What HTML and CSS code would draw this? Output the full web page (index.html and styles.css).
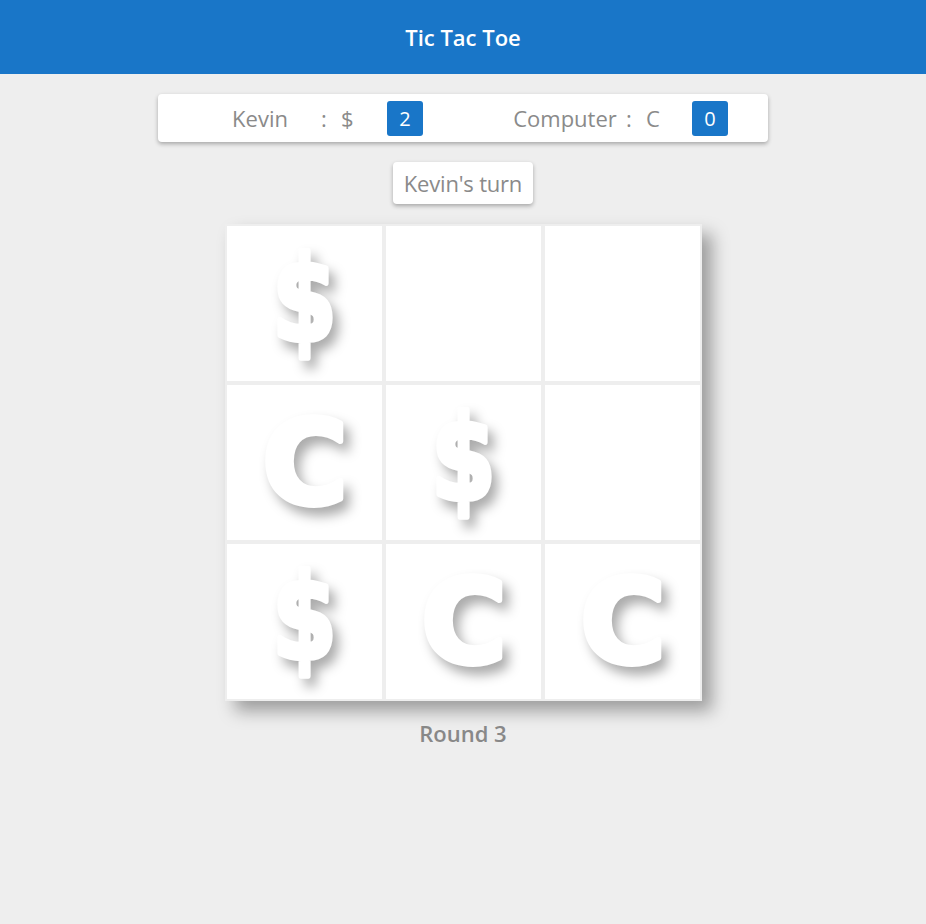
FILE: index.html
```html
<!DOCTYPE html>
<html>
<head>
<meta charset="utf-8">
<title>Tic Tac Toe</title>
<link rel="stylesheet" href="styles.css">
</head>
<body>
<header class="topbar"><h1 class="title">Tic Tac Toe</h1></header>
<main class="game">
  <section class="scores">
    <div class="player">
      <span class="name">Kevin</span><span class="colon">:</span><span class="sym">$</span><span class="badge">2</span>
    </div>
    <div class="player">
      <span class="name">Computer</span><span class="colon">:</span><span class="sym">C</span><span class="badge">0</span>
    </div>
  </section>
  <div class="turn">Kevin's turn</div>
  <div class="board">
    <div class="cell"><svg class="mark" viewBox="0 0 155 155"><text class="dollar" x="77.5" y="115" text-anchor="middle">$</text></svg></div>
    <div class="cell"></div>
    <div class="cell"></div>
    <div class="cell"><svg class="mark" viewBox="0 0 155 155"><text class="cee" x="78" y="118" text-anchor="middle">C</text></svg></div>
    <div class="cell"><svg class="mark" viewBox="0 0 155 155"><text class="dollar" x="77.5" y="115" text-anchor="middle">$</text></svg></div>
    <div class="cell"></div>
    <div class="cell"><svg class="mark" viewBox="0 0 155 155"><text class="dollar" x="77.5" y="115" text-anchor="middle">$</text></svg></div>
    <div class="cell"><svg class="mark" viewBox="0 0 155 155"><text class="cee" x="78" y="118" text-anchor="middle">C</text></svg></div>
    <div class="cell"><svg class="mark" viewBox="0 0 155 155"><text class="cee" x="78" y="118" text-anchor="middle">C</text></svg></div>
  </div>
  <div class="round">Round 3</div>
</main>
</body>
</html>
```
FILE: styles.css
```css
* { box-sizing: border-box; }
html, body { margin: 0; padding: 0; }
body {
  background: #eeeeee;
  font-family: "Open Sans", "Noto Sans", sans-serif;
  color: #8a8a8a;
  width: 926px;
  min-height: 924px;
}
.topbar {
  height: 74px;
  background: #1976c8;
  display: flex;
  align-items: center;
  justify-content: center;
}
.title {
  margin: 0;
  color: #fff;
  font-size: 22px;
  font-weight: 600;
  line-height: 1;
}
.game {
  display: flex;
  flex-direction: column;
  align-items: center;
  padding-top: 20px;
}
.scores {
  width: 610px;
  height: 48px;
  background: #fff;
  border-radius: 4px;
  box-shadow: 0 2px 4px rgba(0,0,0,0.3);
  display: flex;
}
.player {
  width: 305px;
  display: flex;
  align-items: center;
  font-size: 22px;
}
.name {
  width: 104px;
  margin-left: 50px;
  text-align: center;
}
.colon { margin-left: 9px; width: 6px; }
.sym { margin-left: 14px; width: 18px; }
.badge {
  margin-left: 28px;
  width: 36px;
  height: 35px;
  border-radius: 3px;
  background: #1976c8;
  color: #fff;
  font-size: 20px;
  display: flex;
  align-items: center;
  justify-content: center;
}
.turn {
  margin-top: 20px;
  height: 42px;
  padding: 0 11px;
  background: #fff;
  border-radius: 4px;
  box-shadow: 0 2px 4px rgba(0,0,0,0.3);
  font-size: 22px;
  letter-spacing: -0.2px;
  display: flex;
  align-items: center;
}
.board {
  margin-top: 20px;
  padding: 2px;
  background: #eeeeee;
  display: grid;
  grid-template-columns: repeat(3, 155px);
  grid-template-rows: repeat(3, 155px);
  gap: 4px;
  box-shadow: 10px 10px 16px rgba(0,0,0,0.34);
}
.cell {
  background: #fff;
}
.mark {
  display: block;
  width: 155px;
  height: 155px;
  overflow: visible;
  filter: drop-shadow(6px 8px 6px rgba(0,0,0,0.33));
}
.mark text {
  font-family: "DejaVu Sans", sans-serif;
  font-weight: 700;
  font-style: normal;
  fill: #fff;
  stroke: #fff;
  stroke-width: 6px;
  stroke-linejoin: round;
  stroke-linecap: round;
}
.mark .cee { font-size: 116px; }
.mark .dollar {
  font-size: 118px;
  transform-box: view-box;
  transform-origin: 77.5px 0;
  transform: scaleX(0.78);
}
.round {
  margin-top: 17px;
  font-size: 22px;
  font-weight: 600;
  color: #888;
}
```
